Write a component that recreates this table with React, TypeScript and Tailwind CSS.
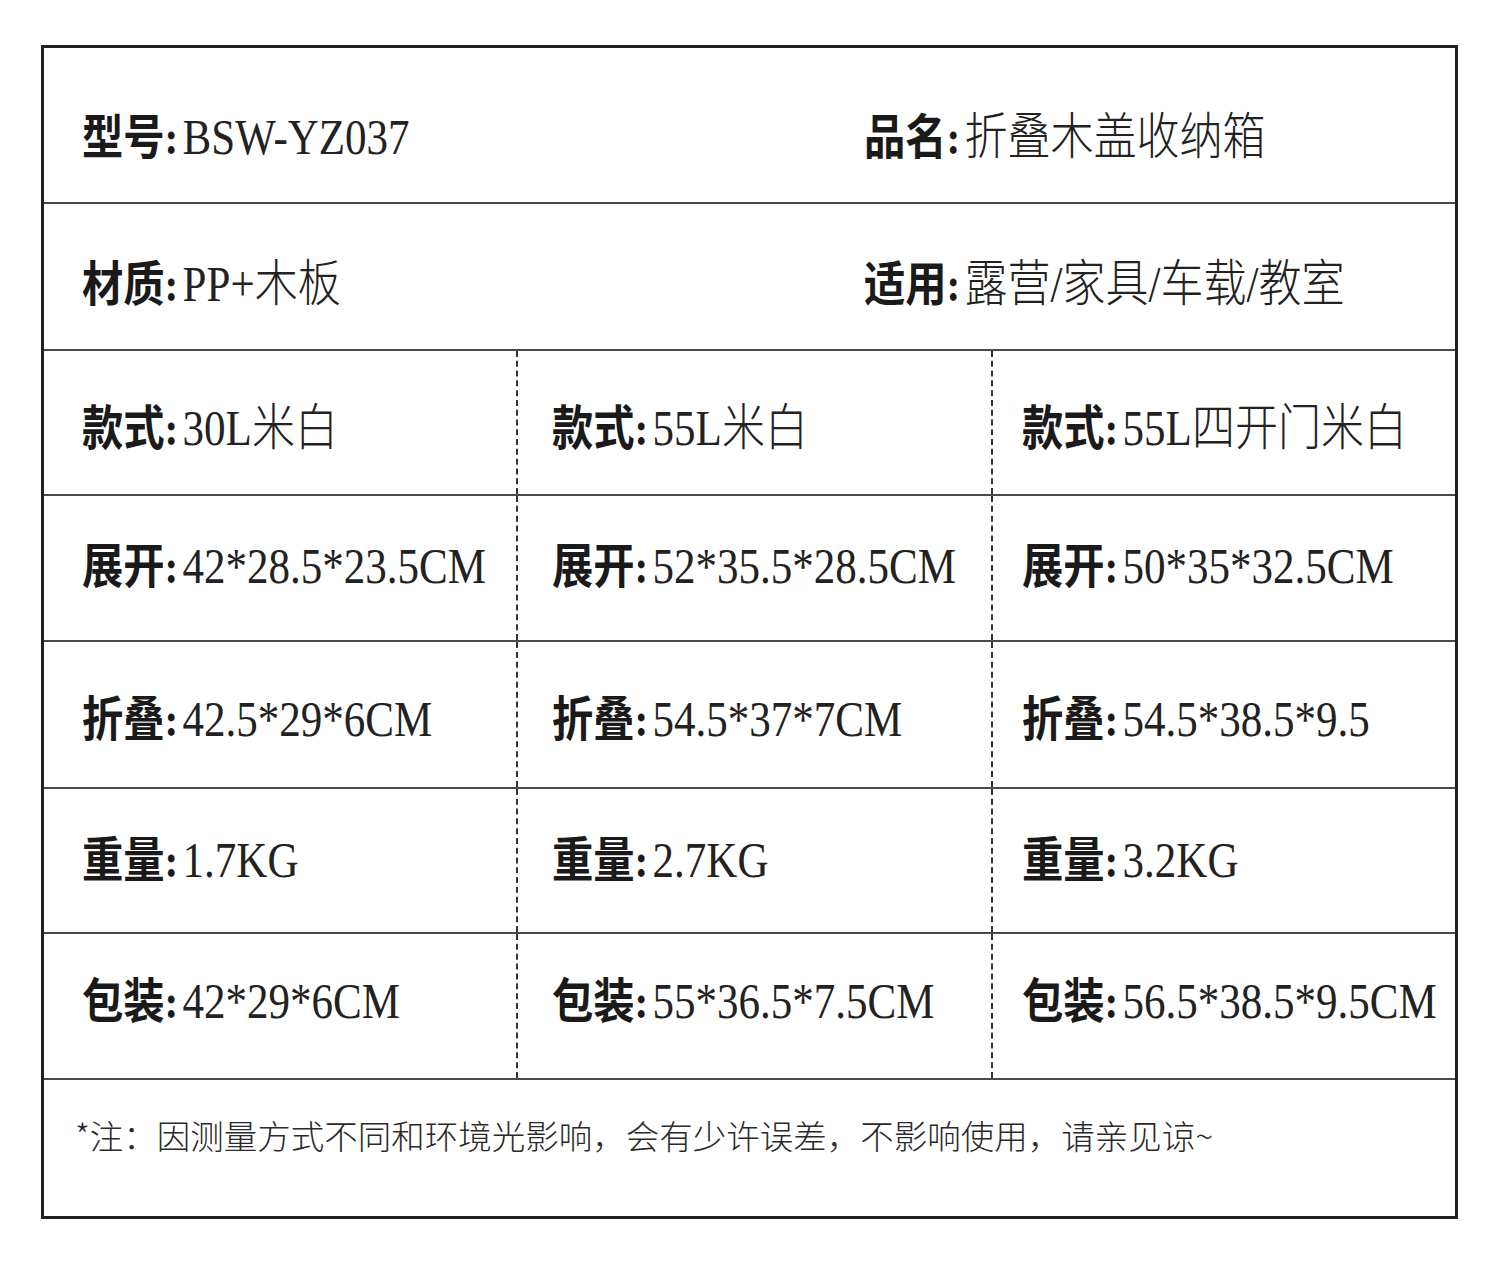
const cjk = "font-['Liberation_Serif','Noto_Sans_CJK_SC',serif]";
const cjkSans = "font-['Noto_Sans_CJK_SC',sans-serif]";

function Cell({ label, value }: { label: string; value: string }) {
  return (
    <span className="inline-block origin-left scale-x-[0.86] whitespace-nowrap leading-none text-[#1a1a1a]">
      <span className={`${cjk} text-[48px] font-bold`}>{label}:</span>
      <span className={`${cjk} ml-[5px] text-[50px] font-light text-[#222]`}>{value}</span>
    </span>
  );
}

const rows = [
  {
    pad: "pt-[10px]",
    h: "h-[145px]",
    label: "款式",
    values: ["30L米白", "55L米白", "55L四开门米白"],
  },
  {
    pad: "pb-[4px]",
    h: "h-[146px]",
    label: "展开",
    values: ["42*28.5*23.5CM", "52*35.5*28.5CM", "50*35*32.5CM"],
  },
  {
    pad: "pt-[8px]",
    h: "h-[147px]",
    label: "折叠",
    values: ["42.5*29*6CM", "54.5*37*7CM", "54.5*38.5*9.5"],
  },
  {
    pad: "pb-[2px]",
    h: "h-[145px]",
    label: "重量",
    values: ["1.7KG", "2.7KG", "3.2KG"],
  },
  {
    pad: "pb-[10px]",
    h: "h-[146px]",
    label: "包装",
    values: ["42*29*6CM", "55*36.5*7.5CM", "56.5*38.5*9.5CM"],
  },
];

const colPad = ["pl-[38px]", "pl-[34px]", "pl-[29px]"];
const colBorder = ["", "border-l-2 border-dashed border-[#333]", "border-l-2 border-dashed border-[#333]"];

export default function App() {
  return (
    <div className="min-h-screen bg-white pl-[41px] pt-[45px]">
      <div className="flex w-[1417px] flex-col border-[3px] border-[#222]">
        {/* 型号 / 品名 */}
        <div className="flex h-[156px] items-center border-b-2 border-[#4a4a4a] pl-[38px] pt-[24px]">
          <div className="w-[782px]">
            <Cell label="型号" value="BSW-YZ037" />
          </div>
          <Cell label="品名" value="折叠木盖收纳箱" />
        </div>

        {/* 材质 / 适用 */}
        <div className="flex h-[147px] items-center border-b-2 border-[#4a4a4a] pl-[38px] pt-[14px]">
          <div className="w-[782px]">
            <Cell label="材质" value="PP+木板" />
          </div>
          <Cell label="适用" value="露营/家具/车载/教室" />
        </div>

        {/* 三款规格 */}
        {rows.map((r) => (
          <div
            key={r.label}
            className={`grid ${r.h} grid-cols-[472px_475px_1fr] border-b-2 border-[#4a4a4a]`}
          >
            {r.values.map((v, i) => (
              <div
                key={i}
                className={`flex items-center ${colPad[i]} ${colBorder[i]} ${r.pad}`}
              >
                <Cell label={r.label} value={v} />
              </div>
            ))}
          </div>
        ))}

        {/* 备注 */}
        <div className="flex h-[136px] items-center pb-[26px] pl-[31px]">
          <p className={`${cjkSans} whitespace-nowrap text-[33.5px] font-light leading-none text-[#2a2a2a]`}>
            *注：因测量方式不同和环境光影响，会有少许误差，不影响使用，请亲见谅~
          </p>
        </div>
      </div>
    </div>
  );
}
